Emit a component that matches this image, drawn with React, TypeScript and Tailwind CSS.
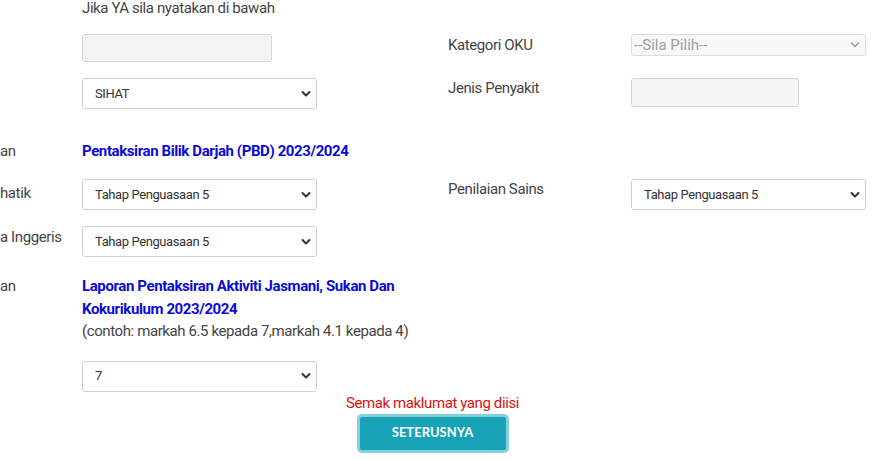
import React from "react";

const Select = ({ value, className = "", disabled = false }: { value: string; className?: string; disabled?: boolean }) => (
  <div className={`relative ${className}`}>
    <div
      className={
        disabled
          ? "h-full w-full border rounded-[3px] flex items-center bg-[#f8f8f8] border-[#dcdcdc] text-[#a0a0a0] pl-[2px] text-[15px] tracking-normal"
          : "h-full w-full border rounded-[3px] flex items-center bg-white border-[#cfcfcf] text-[#333] pl-[12px] text-[13px]"
      }
    >
      {value}
    </div>
    <svg width="10" height="7" viewBox="0 0 10 7" className="absolute right-[6px] top-1/2 -translate-y-1/2">
      <path
        d="M1.5 1.5 L5 5 L8.5 1.5"
        fill="none"
        stroke={disabled ? "#999" : "#333"}
        strokeWidth={disabled ? 1.3 : 2}
        strokeLinecap="round"
        strokeLinejoin="round"
      />
    </svg>
  </div>
);

export default function App() {
  return (
    <div
      className="w-[890px] h-[459px] overflow-hidden bg-white relative text-[#444] tracking-[-0.4px]"
      style={{ fontFamily: "Roboto, 'Liberation Sans', sans-serif" }}
    >
      <div className="pl-[82px] pt-[1px] text-[15px] leading-[14px]">Jika YA sila nyatakan di bawah</div>

      {/* Row 1 */}
      <div className="flex mt-[19px]">
        <div className="w-[82px]" />
        <div className="w-[366px]">
          <div className="w-[190px] h-[28px] bg-[#f3f3f3] border border-[#d4d4d4] rounded-[3px]" />
        </div>
        <div className="w-[183px] text-[15px] leading-[20px] pt-[1px]">Kategori OKU</div>
        <Select value="--Sila Pilih--" disabled className="w-[235px] h-[22px]" />
      </div>

      {/* Row 2 */}
      <div className="flex mt-[16px]">
        <div className="w-[82px]" />
        <div className="w-[366px]">
          <Select value="SIHAT" className="w-[235px] h-[31px]" />
        </div>
        <div className="w-[183px] text-[15px] leading-[20px]">Jenis Penyakit</div>
        <div className="w-[168px] h-[29px] bg-[#f5f5f5] border border-[#d4d4d4] rounded-[3px]" />
      </div>

      {/* Row 3 heading */}
      <div className="flex mt-[31px] text-[15px] leading-[22px]">
        <div className="w-[82px]">an</div>
        <div className="font-bold text-[#0a0ad8]">Pentaksiran Bilik Darjah (PBD) 2023/2024</div>
      </div>

      {/* Row 4 */}
      <div className="flex mt-[17px]">
        <div className="w-[82px] text-[15px] leading-[20px] pt-[4px]">hatik</div>
        <div className="w-[366px]">
          <Select value="Tahap Penguasaan 5" className="w-[235px] h-[31px]" />
        </div>
        <div className="w-[183px] text-[15px] leading-[20px]">Penilaian Sains</div>
        <Select value="Tahap Penguasaan 5" className="w-[235px] h-[31px]" />
      </div>

      {/* Row 5 */}
      <div className="flex mt-[16px]">
        <div className="w-[82px] text-[15px] leading-[20px] pt-[1px]">a Inggeris</div>
        <div className="w-[366px]">
          <Select value="Tahap Penguasaan 5" className="w-[235px] h-[31px]" />
        </div>
      </div>

      {/* Row 6 */}
      <div className="flex mt-[18px] text-[15px] leading-[22.5px]">
        <div className="w-[82px]">an</div>
        <div>
          <div className="font-bold text-[#0a0ad8] w-[320px]">Laporan Pentaksiran Aktiviti Jasmani, Sukan Dan Kokurikulum 2023/2024</div>
          <div>(contoh: markah 6.5 kepada 7,markah 4.1 kepada 4)</div>
        </div>
      </div>

      {/* Row 7 */}
      <div className="flex mt-[18px]">
        <div className="w-[82px]" />
        <Select value="7" className="w-[235px] h-[31px]" />
      </div>

      <div className="flex flex-col items-center w-[865px] mt-[1px]">
        <div className="text-[15px] leading-[20px] text-[#e01010]">Semak maklumat yang diisi</div>
        <button
          className="mt-[1px] w-[152px] h-[39px] rounded-[5px] bg-[#17a2b8] border-[3px] border-[#85d0dc] text-white font-bold text-[13px] tracking-normal"
          style={{ fontFamily: "Lato, 'Open Sans', sans-serif" }}
        >
          SETERUSNYA
        </button>
      </div>
    </div>
  );
}
